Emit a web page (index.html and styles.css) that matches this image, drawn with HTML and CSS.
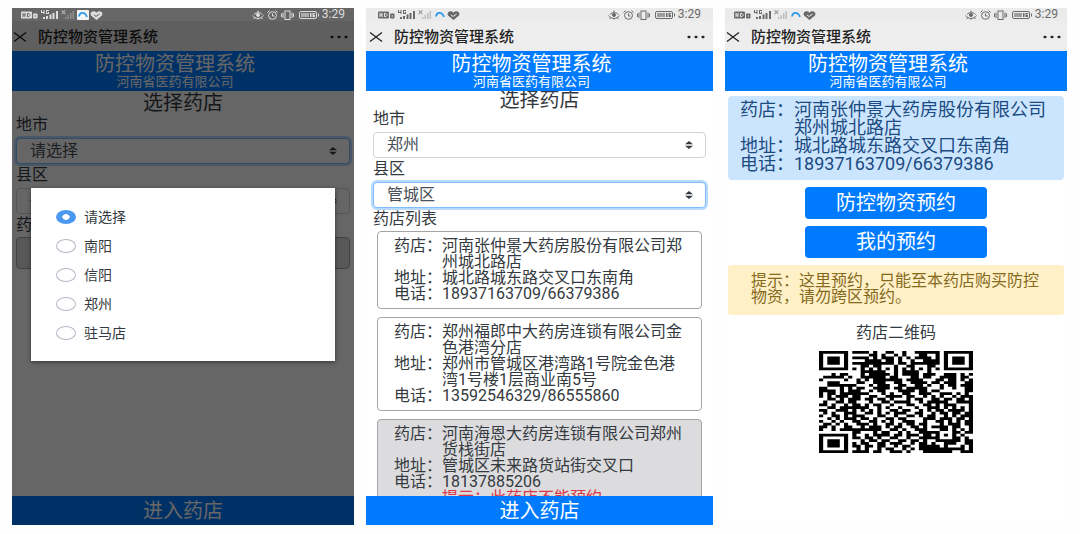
FILE: index.html
```
<!DOCTYPE html>
<html lang="zh-CN">
<head>
<meta charset="utf-8">
<meta name="viewport" content="width=device-width, initial-scale=1">
<title>防控物资管理系统</title>
<link rel="stylesheet" href="styles.css">
</head>
<body>
<svg class="sprite" aria-hidden="true">
  <symbol id="left-icons" viewBox="0 0 82 12">
    <g fill="currentColor">
      <rect x="0" y="2.500" width="11" height="7" rx="1"/>
      <rect x="12" y="4.500" width="4.500" height="5" rx="1"/>
      <path d="M20 1h1v2h1.500V1h1v4h-1V4H20zM25 1h3v1h-2v2h1V3h1v2h-3zM22 8h2v2h-2zM25 7h2v3h-2zM28.500 5.500h2V10h-2zM31.500 4h2v6h-2zM35 2h2v8h-2z"/>
      <path d="M41 1l1.500 1.500L44 1l.7.700L43.200 3.200l1.500 1.500-.7.700-1.500-1.500L41 5.400l-.7-.7 1.500-1.500-1.500-1.500z" opacity=".7"/>
      <path d="M44 8h1.500v2H44zM46.500 6H48v4h-1.500zM49 4h1.500v6H49zM51.500 2H53v8h-1.500z" opacity=".35"/>
      <path d="M75.500 11L70 6.500C68.800 4 70.500 2.300 72.500 2.300c1.400 0 2.400.6 3 1.400.6-.8 1.600-1.400 3-1.400 2 0 3.700 1.700 2.500 4.200z"/>
    </g>
    <path class="icon-line" d="M2 4v4M2 6h2M4 4v4M6.500 4.500v3h1.500l1-1V5.500l-1-1zM13.500 7h1.500M73 6l2 1.500L78.500 5"/>
    <rect class="swoosh-box" x="56" y="1" width="12" height="10" rx="1"/>
    <path d="M58 7.500C58.500 3 64 2 66 8" fill="none" stroke="#2f9be8" stroke-width="1.800"/>
  </symbol>
  <symbol id="right-icons" viewBox="0 0 68 12">
    <g fill="none" stroke="currentColor">
      <path d="M.5 6.500c3 4 8 4 11 0M2 5.500c2.500-2.500 6-2.500 8.500 0M1.500 10l1.500-1.500M6 10.500V9M10.500 10L9 8.500M6 1.500v2"/>
      <circle cx="6" cy="6" r="1.500" fill="currentColor"/>
      <ellipse cx="20.500" cy="6.500" rx="4" ry="3.800"/>
      <path d="M20.500 4.500v2.500h2M15.500 3.500l2-2M25.500 3.500l-2-2"/>
      <rect x="33" y="2" width="5" height="8.500"/>
      <path d="M31 3.500v5.500M29.500 4.500v3.500M40 3.500v5.500M41.500 4.500v3.500"/>
      <rect x="47.500" y="2.500" width="17" height="7" rx="1.500"/>
      <path d="M66.500 4.500v3"/>
    </g>
    <path d="M49 4h8v4h-8z" fill="currentColor" opacity=".6"/>
    <path d="M58 4h1.500v4H58zM60.500 4H63v1h-1.500v.7H63V8h-2.500z" fill="currentColor"/>
  </symbol>
  <symbol id="close" viewBox="0 0 14 12">
    <path d="M1 1.500l12 9M13 1.500l-12 9" fill="none" stroke="currentColor" stroke-width="1.300"/>
  </symbol>
  <symbol id="more" viewBox="0 0 18 4">
    <g fill="currentColor"><ellipse cx="2" cy="2" rx="1.600" ry="1.300"/><ellipse cx="9" cy="2" rx="1.600" ry="1.300"/><ellipse cx="16" cy="2" rx="1.600" ry="1.300"/></g>
  </symbol>
  <symbol id="arrows" viewBox="0 0 8 8">
    <path d="M4 0l4 3.300H0zM4 8L0 4.700h8z" fill="#343a40"/>
  </symbol>
</svg>

<div class="screens">
  <section class="phone phone-dimmed">
    <div class="status">
      <svg class="status-left"><use href="#left-icons"/></svg>
      <svg class="status-right"><use href="#right-icons"/></svg>
      <span>3:29</span>
    </div>
    <div class="navbar">
      <button class="icon-button" aria-label="关闭"><svg class="close"><use href="#close"/></svg></button>
      <span class="nav-title">防控物资管理系统</span>
      <button class="icon-button" aria-label="更多"><svg class="more"><use href="#more"/></svg></button>
    </div>
    <header class="brand"><h1>防控物资管理系统</h1><p>河南省医药有限公司</p></header>
    <main class="content">
      <h2 class="title">选择药店</h2>
      <div class="field">
        <label for="city-a">地市</label>
        <div class="select-wrap"><select id="city-a" class="focused"><option>请选择</option></select><svg class="arrows"><use href="#arrows"/></svg></div>
      </div>
      <div class="field">
        <label for="area-a">县区</label>
        <div class="select-wrap"><select id="area-a"><option>-</option></select><svg class="arrows"><use href="#arrows"/></svg></div>
      </div>
      <h3 class="list-title">药店列表</h3>
      <div class="store store-disabled store-empty"></div>
    </main>
    <button class="enter">进入药店</button>
    <div class="overlay">
      <div class="dialog" role="dialog" aria-label="地市">
        <label><input type="radio" name="city" checked>请选择</label>
        <label><input type="radio" name="city">南阳</label>
        <label><input type="radio" name="city">信阳</label>
        <label><input type="radio" name="city">郑州</label>
        <label><input type="radio" name="city">驻马店</label>
      </div>
    </div>
  </section>

  <section class="phone phone-list">
    <div class="status">
      <svg class="status-left"><use href="#left-icons"/></svg>
      <svg class="status-right"><use href="#right-icons"/></svg>
      <span>3:29</span>
    </div>
    <div class="navbar">
      <button class="icon-button" aria-label="关闭"><svg class="close"><use href="#close"/></svg></button>
      <span class="nav-title">防控物资管理系统</span>
      <button class="icon-button" aria-label="更多"><svg class="more"><use href="#more"/></svg></button>
    </div>
    <header class="brand"><h1>防控物资管理系统</h1><p>河南省医药有限公司</p></header>
    <main class="content">
      <h2 class="title">选择药店</h2>
      <div class="field">
        <label for="city-b">地市</label>
        <div class="select-wrap"><select id="city-b"><option>郑州</option></select><svg class="arrows"><use href="#arrows"/></svg></div>
      </div>
      <div class="field">
        <label for="area-b">县区</label>
        <div class="select-wrap"><select id="area-b" class="focused"><option>管城区</option></select><svg class="arrows"><use href="#arrows"/></svg></div>
      </div>
      <h3 class="list-title">药店列表</h3>
      <div class="stores">
        <dl class="store">
          <dt>药店：</dt><dd>河南张仲景大药房股份有限公司郑州城北路店</dd>
          <dt>地址：</dt><dd>城北路城东路交叉口东南角</dd>
          <dt>电话：</dt><dd>18937163709/66379386</dd>
        </dl>
        <dl class="store">
          <dt>药店：</dt><dd>郑州福郎中大药房连锁有限公司金色港湾分店</dd>
          <dt>地址：</dt><dd>郑州市管城区港湾路1号院金色港湾1号楼1层商业南5号</dd>
          <dt>电话：</dt><dd>13592546329/86555860</dd>
        </dl>
        <dl class="store store-disabled">
          <dt>药店：</dt><dd>河南海恩大药房连锁有限公司郑州货栈街店</dd>
          <dt>地址：</dt><dd>管城区未来路货站街交叉口</dd>
          <dt>电话：</dt><dd>18137885206</dd>
          <dd class="warning">提示：此药店不能预约</dd>
        </dl>
      </div>
    </main>
    <button class="enter">进入药店</button>
  </section>

  <section class="phone phone-detail">
    <div class="status">
      <svg class="status-left"><use href="#left-icons"/></svg>
      <svg class="status-right"><use href="#right-icons"/></svg>
      <span>3:29</span>
    </div>
    <div class="navbar">
      <button class="icon-button" aria-label="关闭"><svg class="close"><use href="#close"/></svg></button>
      <span class="nav-title">防控物资管理系统</span>
      <button class="icon-button" aria-label="更多"><svg class="more"><use href="#more"/></svg></button>
    </div>
    <header class="brand"><h1>防控物资管理系统</h1><p>河南省医药有限公司</p></header>
    <main class="content">
      <dl class="info">
        <dt>药店：</dt><dd>河南张仲景大药房股份有限公司郑州城北路店</dd>
        <dt>地址：</dt><dd>城北路城东路交叉口东南角</dd>
        <dt>电话：</dt><dd>18937163709/66379386</dd>
      </dl>
      <div class="actions">
        <button class="action">防控物资预约</button>
        <button class="action">我的预约</button>
      </div>
      <p class="notice">提示：这里预约，只能至本药店购买防控物资，请勿跨区预约。</p>
      <figure class="code">
        <figcaption>药店二维码</figcaption>
        <svg class="qr" viewBox="0 0 37 37" preserveAspectRatio="none" role="img" aria-label="药店二维码"><path id="qr-path"/></svg>
      </figure>
    </main>
  </section>
</div>
<script src="qr.js"></script>
</body>
</html>
```
FILE: styles.css
```
* { box-sizing: border-box; }
body {
  margin: 0;
  background: #fefefe;
  color: #343a40;
  font: 16px/16px Roboto, "Noto Sans CJK SC", sans-serif;
}
h1, h2, h3, p, dl, dd, figure { margin: 0; font-weight: 400; }
button { border: 0; padding: 0; font: inherit; color: inherit; background: none; }
.sprite { position: absolute; width: 0; height: 0; }
.icon-line { fill: none; stroke: var(--status-bg); stroke-width: 1; }
.swoosh-box { fill: var(--swoosh-bg); }

.screens {
  display: grid;
  grid-template-columns: 342fr 347fr 342fr;
  gap: 12px;
  height: 100vh;
  padding: 8px 13px 9px 12px;
}
.phone {
  --status-bg: #ebebeb;
  --swoosh-bg: transparent;
  --edge: 1px;
  position: relative;
  display: flex;
  flex-direction: column;
  min-width: 0;
  min-height: 0;
  background: #fff;
}
.status {
  display: flex;
  align-items: center;
  height: 13px;
  padding: 0 9px;
  background: var(--status-bg);
  color: #6a6a6a;
  font-size: 12px;
  line-height: 13px;
}
.status-left { width: 82px; height: 12px; }
.status-right { width: 68px; height: 12px; margin: 0 2px 0 auto; }
.navbar {
  display: flex;
  align-items: center;
  gap: 11px;
  height: 30px;
  padding: 2px calc(var(--edge) + 5px) 0 var(--edge);
  background: #ededed;
  color: #222;
}
.navbar svg, .arrows { display: block; }
.close { width: 14px; height: 12px; }
.more { width: 18px; height: 4px; }
.nav-title { flex: 1; font-size: 15px; font-weight: 500; }
.brand {
  padding: 2px 16px 2px 0;
  background: #007bff;
  color: #fff;
  text-align: center;
}
.brand h1 { font-size: 20px; line-height: 22px; }
.brand p { font-size: 13px; line-height: 14px; }
.content { flex: 1; min-height: 0; overflow: hidden; padding: 0 4px; }
.title { font-size: 20px; line-height: 25px; text-align: center; }
.field { display: grid; gap: 5px; padding-bottom: 3px; }
.select-wrap { position: relative; }
select {
  display: block;
  width: 100%;
  height: 26px;
  padding: 0 13px;
  border: 1px solid #ced4da;
  border-radius: 4px;
  background: #fff;
  color: #495057;
  font: inherit;
  line-height: 24px;
  appearance: none;
}
select.focused { border-color: #80bdff; box-shadow: 0 0 0 2px #b8daff; }
.arrows { position: absolute; right: 13px; top: 9px; width: 8px; height: 8px; }
.list-title { padding-bottom: 4px; font-size: 16px; }
.enter {
  height: 29px;
  background: #007bff;
  color: #fff;
  font-size: 20px;
}
.stores { display: grid; gap: 8px; padding: 0 4px; }
.store, .info { display: grid; grid-template-columns: 3em 1fr; align-content: start; }
.store {
  padding: 6px 16px;
  border: 1px solid #a5a5a8;
  border-radius: 4px;
}
.store dd, .info dd { grid-column: 2; }
.store-disabled { background: #dcdbdd; }
.store-empty { min-height: 32px; }
.warning { color: #dc3545; }

.phone-dimmed { --status-bg: #666; --swoosh-bg: #f4f4f4; }
.phone-dimmed .status { position: relative; z-index: 2; color: #ddd; }
.phone-dimmed .title { padding-bottom: 1px; }
.overlay {
  position: absolute;
  inset: 0;
  padding: 180px 19px 0;
  background: rgba(0, 0, 0, .6);
}
.dialog {
  display: grid;
  padding: 14px 25px;
  background: #fff;
  box-shadow: 0 1px 4px rgba(0, 0, 0, .5);
}
.dialog label {
  display: flex;
  align-items: center;
  gap: 8px;
  height: 29px;
  font-size: 14px;
}
.dialog input {
  width: 20px;
  height: 14px;
  margin: 0;
  border: 1px solid #b4b8c4;
  border-radius: 50%;
  appearance: none;
}
.dialog input:checked {
  border: 0;
  background: radial-gradient(ellipse 4px 3px, #fff 85%, #4a98f0);
}

.phone-list { --edge: 3px; }
.phone-list .status { padding-left: 12px; padding-right: 12px; }
.phone-list .content { padding: 0 7px; }
.phone-list .title { padding-bottom: 2px; line-height: 18px; }

.phone-detail .content { padding: 5px 3px; }
.info {
  padding: 5px 12px 7px;
  border-radius: 4px;
  background: #cce5ff;
  color: #1b4b80;
  font-size: 18px;
  line-height: 18px;
}
.actions { display: grid; justify-content: center; gap: 7px; padding: 7px 0; }
.action {
  width: 182px;
  height: 32px;
  border-radius: 4px;
  background: #007bff;
  color: #fff;
  font-size: 20px;
}
.notice {
  padding: 8px 20px 10px 23px;
  border-radius: 3px;
  background: #fff0c8;
  color: #856a1c;
}
.code { padding-top: 10px; text-align: center; }
.qr { display: block; width: 154px; height: 102px; margin: 10px auto 0; }
```
FILE: qr.js
```
const rows = [
  "#######.####.#..##..#..######.#######",
  "#.....#.....##.#..#.#...##..#.#.....#",
  "#.###.#.####.#.###.#.#.####.#.#.###.#",
  "#.###.#....####.##.#..#..####.#.###.#",
  "#.###.#.##########.##.#######.#.###.#",
  "#.....#...##.##...#..##...##..#.....#",
  "#######.#.#.#.#.#.#.#.#.#.#.#.#######",
  "..........######..#.####..#..........",
  "...#.##...#.#####.#.####.###..###.#.#",
  ".#####.#..######.##...##.##..####.##.",
  "#.....#..#.#.#######.####...##.##.#.#",
  "..###....##..###..##..####.##.###..##",
  "..#######...#.###..##..##.#..#.##.###",
  "##...#.#.##..####.##.#####...#..#..##",
  "####.#.###..#.##...####.##.##......##",
  "#.##.#######...#.#..##..###..###.#.#.",
  "#.#.###.##..##..####.##..#.#.#..#.###",
  "..##.#.###.##.##.#...#.##..##.##.##.#",
  ".#..##.##...#..##.####..#.#####..####",
  "##.#..#.##.#.##..#...##..##.#.###...#",
  "..##.#######..#.#..#...#..###.#.#.#.#",
  "##..###.#.#.#.#..##.##..#.#.##.####.#",
  ".#.#..###..##.#.#.###..##..#.##.##.##",
  "#..##.#.###...##..#..##.#.##..#.#.###",
  "..#.#.###.##.#..##.##....###.###.##.#",
  "#..#.#..##..##.#.#..###..#..##.#.#.##",
  ".##.#.#..###.#..##.#.##.##...#.###.##",
  "##.#..##..#.###.#.##..##.#.####.##..#",
  "#..#.##########..##.#..###...##.#.#.#",
  "........##...#.##..#.#..#####...##.##",
  "#######.#..#.####.##.###.##.#.#.#.#..",
  "#.....#.##.##.#..##..#..#####...##.#.",
  "#.###.#...#.##.##..##.##.#..######.##",
  "#.###.#.#.##..##.###..#.##.#..###..##",
  "#.###.#.##.##.##..#.##..#####.#...#.#",
  "#.....#..#.#..#.##..#.#.###########.#",
  "#######.####.##..###.#...#######..###"
];
document.getElementById("qr-path").setAttribute("d", rows.map((row, y) =>
  [...row].map((cell, x) => cell === "#" ? `M${x} ${y}h1v1h-1z` : "").join("")
).join(""));
```
